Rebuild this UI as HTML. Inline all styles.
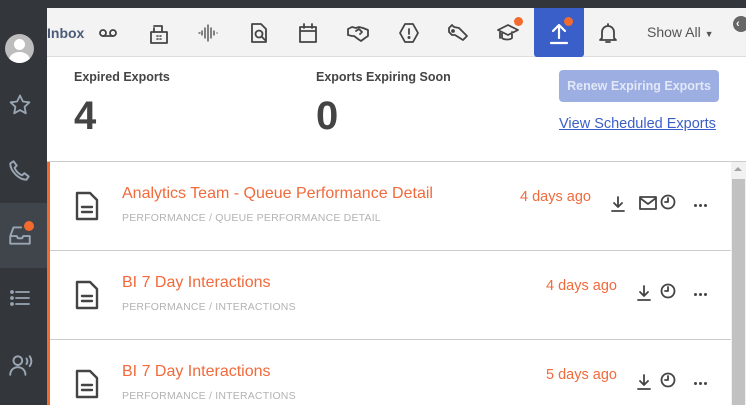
<!DOCTYPE html>
<html><head><meta charset="utf-8"><style>
*{margin:0;padding:0;box-sizing:border-box}
body{width:746px;height:405px;overflow:hidden;background:#fff;font-family:"Liberation Sans",Arial,sans-serif;position:relative}
.a{position:absolute}
svg{position:absolute;fill:none;stroke:#444;stroke-width:1.8;stroke-linecap:round;stroke-linejoin:round}
.side svg{stroke:#9aa6b4}
.title{font-size:16px;color:#f06a3c}
.sub{font-size:10.5px;color:#b3b3b3;letter-spacing:.2px}
.ago{font-size:14.5px;color:#f06a3c}
.dots{position:absolute;width:14px;height:4px}
.dots i{position:absolute;top:0;width:3px;height:3px;border-radius:50%;background:#444}
</style></head><body>
<div class="a" style="left:0;top:0;width:746px;height:8px;background:#33363b"></div>
<div class="a side" style="left:0;top:0;width:47px;height:405px;background:#33363b">
 <div class="a" style="left:0;top:203px;width:47px;height:65px;background:#40444b"></div>
 <div class="a" style="left:5px;top:34px;width:29px;height:29px;border-radius:50%;background:#bdbdbd;overflow:hidden">
  <div class="a" style="left:9px;top:5px;width:11px;height:11px;border-radius:50%;background:#fff"></div>
  <div class="a" style="left:4px;top:18px;width:21px;height:16px;border-radius:50%;background:#fff"></div>
 </div>
 <svg style="left:8px;top:93px" width="24" height="24" viewBox="0 0 24 24"><path d="M12 2.5l2.9 6 6.5.8-4.8 4.5 1.2 6.5L12 17.1 6.2 20.3l1.2-6.5L2.6 9.3l6.5-.8z"/></svg>
 <svg style="left:7px;top:158px" width="26" height="26" viewBox="0 0 24 24"><path d="M6 3l3 4-2 2c1 3 4 6 7 7l2-2 4 3-2 3c-7 0-15-8-15-15z"/></svg>
 <svg style="left:7px;top:222px" width="26" height="26" viewBox="0 0 24 24"><path d="M3 13v7h18v-7M3 13l3-8h7M21 13h-6l-1 2h-4l-1-2H3"/></svg>
 <div class="a" style="left:24px;top:221px;width:10px;height:10px;border-radius:50%;background:#f26b2e"></div>
 <svg style="left:8px;top:286px" width="24" height="24" viewBox="0 0 24 24"><path d="M8 6h13M8 12h13M8 18h13"/><circle cx="4" cy="6" r="1" fill="#9aa6b4"/><circle cx="4" cy="12" r="1" fill="#9aa6b4"/><circle cx="4" cy="18" r="1" fill="#9aa6b4"/></svg>
 <svg style="left:7px;top:352px" width="26" height="26" viewBox="0 0 24 24"><circle cx="10" cy="8" r="4"/><path d="M3 21c0-4 3-7 7-7s7 3 7 7M18 6c1 1.5 1 3.5 0 5M21 4c2 3 2 6 0 9"/></svg>
</div>
<div class="a" style="left:47px;top:8px;width:699px;height:49px;background:#f3f3f3;border-bottom:1px solid #ddd"></div>
<div class="a" style="left:47px;top:25px;font-size:14px;font-weight:bold;color:#4a5a78">Inbox</div>
<svg style="left:97px;top:24px" width="22" height="18" viewBox="0 0 22 18"><circle cx="6" cy="9" r="3"/><circle cx="16" cy="9" r="3"/><path d="M6 12h10"/></svg>
<svg style="left:148px;top:22px" width="22" height="24" viewBox="0 0 22 24"><path d="M6 4h8v6M3 10h16v11H3zM6 10V6"/><path d="M9 14h1M12 14h1M9 17h1M12 17h1" stroke-width="1.6"/></svg>
<svg style="left:197px;top:22px;stroke-width:1.3" width="22" height="22" viewBox="0 0 22 22"><path d="M2 11h1M5 9v4M8 6v10M11 3v16M14 6v10M17 9v4M20 11h0"/></svg>
<svg style="left:248px;top:21px" width="22" height="24" viewBox="0 0 22 24"><path d="M4 3h9l5 5v13H4z"/><circle cx="11" cy="13" r="3.5"/><path d="M13.5 15.5l3.5 3.5"/></svg>
<svg style="left:297px;top:21px" width="22" height="24" viewBox="0 0 22 24"><path d="M3 6h16v15H3zM3 10h16M7 3v4M15 3v4"/></svg>
<svg style="left:346px;top:22px" width="24" height="22" viewBox="0 0 24 22"><path d="M2 7l4-2 4 1 3-1 4 1 5 2v6l-3 2-4 3-3-2-4-3-2 0-4-1zM10 9l3-2 3 3-2 2"/></svg>
<svg style="left:397px;top:21px" width="24" height="24" viewBox="0 0 24 24"><path d="M8 3h8l5 9-5 9H8l-5-9z"/><path d="M12 8v5"/><circle cx="12" cy="16.5" r=".6" fill="#444"/></svg>
<svg style="left:446px;top:22px" width="24" height="22" viewBox="0 0 24 22"><circle cx="7" cy="9" r="1" fill="#444"/><path d="M3 6l3-3 2 2 5 1 8 8-4 4-8-5-3 0-3-3z"/></svg>
<svg style="left:496px;top:22px" width="24" height="22" viewBox="0 0 24 22"><path d="M2 8l10-5 10 5-10 5zM6 10v6c2 2 8 2 10 0v-6M4 9v7"/></svg>
<div class="a" style="left:514px;top:17px;width:9px;height:9px;border-radius:50%;background:#f26b2e"></div>
<div class="a" style="left:534px;top:8px;width:50px;height:49px;background:#3a5fc8;border-radius:0 0 3px 3px"></div>
<svg style="left:547px;top:20px;stroke:#fff;stroke-width:2.2" width="24" height="26" viewBox="0 0 24 26"><path d="M12 18V6M6 11l6-6 6 6M4 23h16"/></svg>
<div class="a" style="left:564px;top:17px;width:9px;height:9px;border-radius:50%;background:#f26b2e"></div>
<svg style="left:597px;top:21px" width="22" height="24" viewBox="0 0 22 24"><path d="M5 17V11a6 6 0 0 1 12 0v6l2 2H3zM9 21h4M11 3v2"/></svg>
<div class="a" style="left:647px;top:24px;font-size:14px;color:#555">Show All <span style="font-size:9px">▼</span></div>
<div class="a" style="left:733px;top:16px;width:16px;height:16px;border-radius:50%;background:#666;color:#fff;font-size:11px;line-height:16px;padding-left:3px;font-weight:bold">‹</div>

<div class="a" style="left:74px;top:70px;font-size:12.5px;font-weight:bold;color:#444">Expired Exports</div>
<div class="a" style="left:74px;top:94px;font-size:40px;font-weight:bold;color:#444">4</div>
<div class="a" style="left:316px;top:70px;font-size:12.5px;font-weight:bold;color:#444">Exports Expiring Soon</div>
<div class="a" style="left:316px;top:94px;font-size:40px;font-weight:bold;color:#444">0</div>
<div class="a" style="left:559px;top:70px;width:160px;height:32px;border-radius:4px;background:#9daee3;color:#e3e8f7;font-size:12.5px;font-weight:bold;text-align:center;line-height:32px">Renew Expiring Exports</div>
<div class="a" style="left:559px;top:116px;font-size:14.5px;color:#3a5fc8;text-decoration:underline">View Scheduled Exports</div>

<div class="a" style="left:47px;top:161px;width:699px;height:1px;background:#ccc"></div>
<div class="a" style="left:47px;top:162px;width:3px;height:243px;background:#f26b2e"></div>
<div class="a" style="left:731px;top:162px;width:15px;height:243px;background:#f1f1f1"></div>
<div class="a" style="left:732px;top:179px;width:13px;height:226px;background:#c1c1c1"></div>
<div class="a" style="left:734px;top:167px;width:0;height:0;border-left:4px solid transparent;border-right:4px solid transparent;border-bottom:4px solid #a3a3a3"></div>

<div class="a" style="left:50px;top:250px;width:681px;height:1px;background:#ccc"></div>
<div class="a" style="left:50px;top:339px;width:681px;height:1px;background:#ccc"></div>

<svg style="left:73px;top:190px;stroke-width:2.4" width="28" height="32" viewBox="0 0 28 32"><path d="M4 3h13l7 7v19H4zM9 17h10M9 22h10"/></svg>
<div class="a title" style="left:122px;top:185px">Analytics Team - Queue Performance Detail</div>
<div class="a sub" style="left:122px;top:212px">PERFORMANCE / QUEUE PERFORMANCE DETAIL</div>
<div class="a ago" style="left:520px;top:189px">4 days ago</div>
<svg style="left:609px;top:195px" width="18" height="18" viewBox="0 0 18 18"><path d="M9 2v10M5 8l4 4 4-4M3 16h12"/></svg>
<svg style="left:638px;top:195px" width="20" height="16" viewBox="0 0 20 16"><path d="M2 2h16v12H2zM2 3l8 6 8-6"/></svg>
<svg style="left:659px;top:193px" width="18" height="18" viewBox="0 0 18 18"><circle cx="9" cy="9" r="6.5"/><path d="M9 5v4H6"/></svg>
<div class="dots" style="left:694px;top:204px"><i style="left:0"></i><i style="left:5px"></i><i style="left:10px"></i></div>

<svg style="left:73px;top:279px;stroke-width:2.4" width="28" height="32" viewBox="0 0 28 32"><path d="M4 3h13l7 7v19H4zM9 17h10M9 22h10"/></svg>
<div class="a title" style="left:122px;top:274px">BI 7 Day Interactions</div>
<div class="a sub" style="left:122px;top:301px">PERFORMANCE / INTERACTIONS</div>
<div class="a ago" style="left:546px;top:278px">4 days ago</div>
<svg style="left:635px;top:284px" width="18" height="18" viewBox="0 0 18 18"><path d="M9 2v10M5 8l4 4 4-4M3 16h12"/></svg>
<svg style="left:659px;top:282px" width="18" height="18" viewBox="0 0 18 18"><circle cx="9" cy="9" r="6.5"/><path d="M9 5v4H6"/></svg>
<div class="dots" style="left:694px;top:293px"><i style="left:0"></i><i style="left:5px"></i><i style="left:10px"></i></div>

<svg style="left:73px;top:368px;stroke-width:2.4" width="28" height="32" viewBox="0 0 28 32"><path d="M4 3h13l7 7v19H4zM9 17h10M9 22h10"/></svg>
<div class="a title" style="left:122px;top:363px">BI 7 Day Interactions</div>
<div class="a sub" style="left:122px;top:390px">PERFORMANCE / INTERACTIONS</div>
<div class="a ago" style="left:546px;top:367px">5 days ago</div>
<svg style="left:635px;top:373px" width="18" height="18" viewBox="0 0 18 18"><path d="M9 2v10M5 8l4 4 4-4M3 16h12"/></svg>
<svg style="left:659px;top:371px" width="18" height="18" viewBox="0 0 18 18"><circle cx="9" cy="9" r="6.5"/><path d="M9 5v4H6"/></svg>
<div class="dots" style="left:694px;top:382px"><i style="left:0"></i><i style="left:5px"></i><i style="left:10px"></i></div>
</body></html>
